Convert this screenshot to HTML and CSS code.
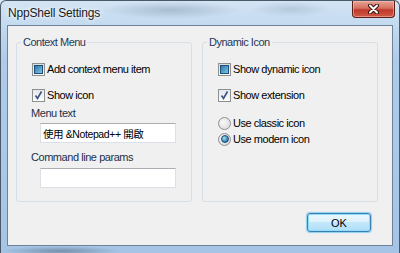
FILE: index.html
```html
<html>

<head>
	<title>NppShell Settings</title>
	<link rel="stylesheet" href="styles.css">
</head>

<body>
	<div class="window">
		<div class="titlebar">
			<span class="title">NppShell Settings</span>
			<button class="close" type="button">
				<svg width="17" height="10" viewBox="0 0 17 10">
					<path d="M5 1.5 L12 8.5 M12 1.5 L5 8.5" stroke="#3b1410" stroke-width="4" stroke-linecap="round"/>
					<path d="M5 1.5 L12 8.5 M12 1.5 L5 8.5" stroke="#fff" stroke-width="2" stroke-linecap="round"/>
				</svg>
			</button>
		</div>
		<div class="client">
			<div class="groups">
				<fieldset class="group">
					<legend>Context Menu</legend>
					<label class="row first"><span class="check mixed"></span>Add context menu item</label>
					<label class="row second"><span class="check checked"><svg width="11" height="11" viewBox="0 0 11 11"><path d="M2.5 5.5 L4.5 8.5 L8.5 1.5" fill="none" stroke="#3d5180" stroke-width="1.6"/></svg></span>Show icon</label>
					<div class="field-label">Menu text</div>
					<input class="edit" type="text" value="使用 &amp;Notepad++ 開啟">
					<div class="field-label spaced">Command line params</div>
					<input class="edit" type="text" value="">
				</fieldset>
				<fieldset class="group">
					<legend>Dynamic Icon</legend>
					<label class="row first"><span class="check mixed"></span>Show dynamic icon</label>
					<label class="row second"><span class="check checked"><svg width="11" height="11" viewBox="0 0 11 11"><path d="M2.5 5.5 L4.5 8.5 L8.5 1.5" fill="none" stroke="#3d5180" stroke-width="1.6"/></svg></span>Show extension</label>
					<label class="row radio-first"><span class="radio"></span>Use classic icon</label>
					<label class="row radio-second"><span class="radio on"></span>Use modern icon</label>
				</fieldset>
			</div>
			<div class="actions">
				<button class="ok" type="button">OK</button>
			</div>
		</div>
	</div>
</body>

</html>
```

FILE: styles.css
```css
html, body { margin: 0; padding: 0; }
body { width: 400px; height: 253px; overflow: hidden; background: #dfe9f3; font: 11px/14px "Liberation Sans", Arial, sans-serif; }

/* glass frame */
.window { box-sizing: border-box; width: 400px; height: 253px; display: flex; flex-direction: column;
	padding: 0 6px 7px 6px; border: 1px solid #4a5868; border-bottom: 0; border-radius: 6px 6px 0 0;
	background:
		radial-gradient(ellipse 70px 9px at 170px 9px, rgba(90,110,130,.3), rgba(90,110,130,0)),
		radial-gradient(ellipse 40px 8px at 290px 8px, rgba(90,110,130,.2), rgba(90,110,130,0)),
		radial-gradient(ellipse 60px 5px at 60px 250px, rgba(60,80,100,.45), rgba(60,80,100,0)),
		linear-gradient(to bottom, #d3e4f4 0, #c3daf0 24px, #aecbea 60px, #a6c5e6 100%); }
.titlebar { height: 24px; display: flex; justify-content: space-between; align-items: flex-start; }
.title { padding: 5px 0 0 1px; font-size: 12px; letter-spacing: -0.2px; color: #1a1a1a; text-shadow: 0 0 6px #f2f7fc, 0 0 3px #fff; }
.close { width: 43px; height: 17px; margin: 0 -2px 0 0; padding: 0; display: flex; align-items: center; justify-content: center;
	border: 1px solid #5b1e18; border-top: 0; border-radius: 0 0 4px 4px;
	background: linear-gradient(to bottom, #e6a494 0, #d5705f 45%, #c0392c 55%, #cf5a45 100%);
	box-shadow: inset 0 0 0 1px rgba(255,200,190,.5); }

.client { flex: 1; background: #f0f0f0; border: 1px solid #6f8298; padding: 0 14px 0 8px; }

/* group boxes */
.groups { display: flex; gap: 10px; height: 167px; margin-top: 9px; }
.group { box-sizing: border-box; width: 176px; margin: 0; padding: 13px 0 0 15px; border: 1px solid #d5dfe5; border-radius: 3px; }
.group legend { margin-left: -11px; padding: 0 2px; color: #1e395b; letter-spacing: -0.5px; }

.row { display: flex; align-items: center; gap: 2px; height: 14px; color: #000; letter-spacing: -0.45px; }
.row.second { margin-top: 12px; }
.row.radio-first { margin-top: 14px; }
.row.radio-second { margin-top: 2px; }

.check { box-sizing: border-box; width: 13px; height: 13px; flex: none; display: flex; align-items: center; justify-content: center;
	border: 1px solid #8e8f8f; background: linear-gradient(to bottom, #dcdcdc, #fafafa); }
.check.checked { background: linear-gradient(to bottom, #e4e8ee, #fbfcfd); }
.check.mixed::after { content: ""; box-sizing: border-box; width: 9px; height: 9px; border: 1px solid #1e4f7a;
	background: linear-gradient(135deg, #2e78a8, #7cc4e6); }
.radio { box-sizing: border-box; width: 13px; height: 13px; flex: none; border-radius: 50%; display: flex; align-items: center; justify-content: center;
	border: 1px solid #8e8f8f; background: radial-gradient(circle at 40% 40%, #fafafa, #d4d4d4); }
.radio.on::after { content: ""; width: 6px; height: 6px; border-radius: 50%; border: 1px solid #1c4a6e;
	background: radial-gradient(circle at 35% 35%, #a8e0f6, #2a7fb0 70%); }

.field-label { margin: 4px 0 0 -1px; color: #1e2f48; letter-spacing: -0.45px; }
.field-label.spaced { margin-top: 7px; }
.edit { box-sizing: border-box; display: block; width: 136px; height: 20px; margin: 3px 0 0 8px; padding: 0 2px;
	border: 1px solid #dbdfe6; border-top-color: #abadb3; background: #fff; color: #000;
	font: 10.5px "Liberation Sans", "Noto Sans CJK TC", sans-serif; letter-spacing: -0.4px; }
.edit + .field-label.spaced + .edit { margin-top: 4px; }

.actions { display: flex; justify-content: flex-end; margin-top: 11px; padding-right: 7px; }
.ok { width: 64px; height: 19px; padding: 0; border: 1px solid #3c7fb1; border-radius: 3px; color: #000;
	font: 11px "Liberation Sans", Arial, sans-serif;
	background: linear-gradient(to bottom, #ecf7fd 0, #dcf1fc 50%, #c3e8fc 50%, #b0def7 100%);
	box-shadow: inset 0 0 0 1px #8fdcf8, 0 0 1px 1px #8fcfee; }
```
